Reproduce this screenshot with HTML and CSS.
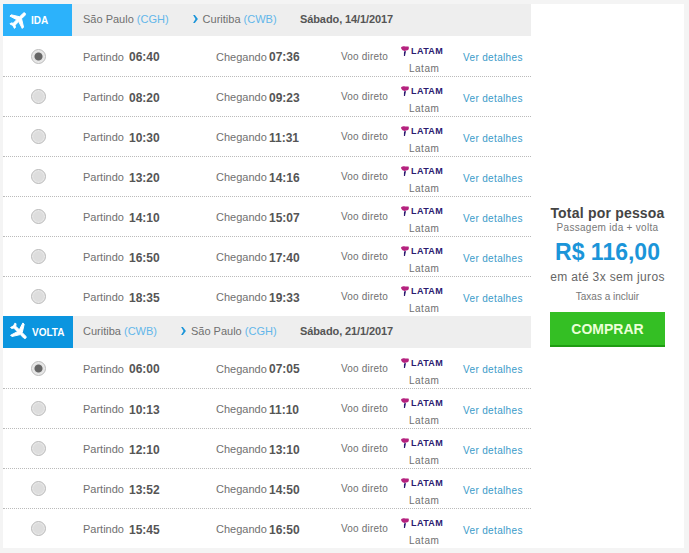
FILE: index.html
```html
<!DOCTYPE html>
<html lang="pt-BR">
<head>
    <meta charset="UTF-8">
    <meta name="viewport" content="width=device-width, initial-scale=1.0">
    <title>Passagens</title>
    <link rel="stylesheet" href="styles.css">
</head>
<body>
    <svg class="sprites" width="0" height="0">
        <symbol id="plane" viewBox="0 0 24 24">
            <path d="M21 16v-2l-8-5V3.5c0-.83-.67-1.5-1.5-1.5S10 2.67 10 3.5V9l-8 5v2l8-2.5V19l-2 1.5V22l3.5-1 3.5 1v-1.5L13 19v-5.5z"/>
        </symbol>
        <symbol id="chevron" viewBox="0 0 6 10">
            <path d="M0 0h2.2L6 5 2.2 10H0l3-5z"/>
        </symbol>
        <symbol id="pin" viewBox="0 0 8 10">
            <path fill="#b5227f" d="M0 1.5C1.5.3 3 .2 4 .5h3.5c.6 1 .5 2.5-.4 3.5L5.3 4.400 3.500 5 1.500 4.200C.6 3.500.2 2.500 0 1.500z"/>
            <path fill="#2b1a70" d="M3 5.500l2-.4L4 10H2.900z"/>
        </symbol>
    </svg>

    <div class="page">
        <div class="flights">
            <div class="leg-header">
                <div class="badge badge-ida"><svg class="plane"><use href="#plane"/></svg>IDA</div>
                <div class="route">
                    <span>São Paulo <em>(CGH)</em></span>
                    <svg class="chevron"><use href="#chevron"/></svg>
                    <span>Curitiba <em>(CWB)</em></span>
                </div>
                <div class="date">Sábado, 14/1/2017</div>
            </div>
            <div class="row">
                <div class="col-radio"><span class="radio selected"></span></div>
                <div class="col-dep"><span class="label">Partindo</span><b>06:40</b></div>
                <div class="col-arr"><span class="label">Chegando</span><b>07:36</b></div>
                <div class="col-stops">Voo direto</div>
                <div class="col-airline"><div class="logo"><svg class="pin"><use href="#pin"/></svg>LATAM</div><div class="airline-name">Latam</div></div>
                <a class="details" href="#">Ver detalhes</a>
            </div>
            <div class="row">
                <div class="col-radio"><span class="radio"></span></div>
                <div class="col-dep"><span class="label">Partindo</span><b>08:20</b></div>
                <div class="col-arr"><span class="label">Chegando</span><b>09:23</b></div>
                <div class="col-stops">Voo direto</div>
                <div class="col-airline"><div class="logo"><svg class="pin"><use href="#pin"/></svg>LATAM</div><div class="airline-name">Latam</div></div>
                <a class="details" href="#">Ver detalhes</a>
            </div>
            <div class="row">
                <div class="col-radio"><span class="radio"></span></div>
                <div class="col-dep"><span class="label">Partindo</span><b>10:30</b></div>
                <div class="col-arr"><span class="label">Chegando</span><b>11:31</b></div>
                <div class="col-stops">Voo direto</div>
                <div class="col-airline"><div class="logo"><svg class="pin"><use href="#pin"/></svg>LATAM</div><div class="airline-name">Latam</div></div>
                <a class="details" href="#">Ver detalhes</a>
            </div>
            <div class="row">
                <div class="col-radio"><span class="radio"></span></div>
                <div class="col-dep"><span class="label">Partindo</span><b>13:20</b></div>
                <div class="col-arr"><span class="label">Chegando</span><b>14:16</b></div>
                <div class="col-stops">Voo direto</div>
                <div class="col-airline"><div class="logo"><svg class="pin"><use href="#pin"/></svg>LATAM</div><div class="airline-name">Latam</div></div>
                <a class="details" href="#">Ver detalhes</a>
            </div>
            <div class="row">
                <div class="col-radio"><span class="radio"></span></div>
                <div class="col-dep"><span class="label">Partindo</span><b>14:10</b></div>
                <div class="col-arr"><span class="label">Chegando</span><b>15:07</b></div>
                <div class="col-stops">Voo direto</div>
                <div class="col-airline"><div class="logo"><svg class="pin"><use href="#pin"/></svg>LATAM</div><div class="airline-name">Latam</div></div>
                <a class="details" href="#">Ver detalhes</a>
            </div>
            <div class="row">
                <div class="col-radio"><span class="radio"></span></div>
                <div class="col-dep"><span class="label">Partindo</span><b>16:50</b></div>
                <div class="col-arr"><span class="label">Chegando</span><b>17:40</b></div>
                <div class="col-stops">Voo direto</div>
                <div class="col-airline"><div class="logo"><svg class="pin"><use href="#pin"/></svg>LATAM</div><div class="airline-name">Latam</div></div>
                <a class="details" href="#">Ver detalhes</a>
            </div>
            <div class="row">
                <div class="col-radio"><span class="radio"></span></div>
                <div class="col-dep"><span class="label">Partindo</span><b>18:35</b></div>
                <div class="col-arr"><span class="label">Chegando</span><b>19:33</b></div>
                <div class="col-stops">Voo direto</div>
                <div class="col-airline"><div class="logo"><svg class="pin"><use href="#pin"/></svg>LATAM</div><div class="airline-name">Latam</div></div>
                <a class="details" href="#">Ver detalhes</a>
            </div>

            <div class="leg-header">
                <div class="badge badge-volta"><svg class="plane plane-back"><use href="#plane"/></svg>VOLTA</div>
                <div class="route">
                    <span>Curitiba <em>(CWB)</em></span>
                    <svg class="chevron"><use href="#chevron"/></svg>
                    <span>São Paulo <em>(CGH)</em></span>
                </div>
                <div class="date">Sábado, 21/1/2017</div>
            </div>
            <div class="row">
                <div class="col-radio"><span class="radio selected"></span></div>
                <div class="col-dep"><span class="label">Partindo</span><b>06:00</b></div>
                <div class="col-arr"><span class="label">Chegando</span><b>07:05</b></div>
                <div class="col-stops">Voo direto</div>
                <div class="col-airline"><div class="logo"><svg class="pin"><use href="#pin"/></svg>LATAM</div><div class="airline-name">Latam</div></div>
                <a class="details" href="#">Ver detalhes</a>
            </div>
            <div class="row">
                <div class="col-radio"><span class="radio"></span></div>
                <div class="col-dep"><span class="label">Partindo</span><b>10:13</b></div>
                <div class="col-arr"><span class="label">Chegando</span><b>11:10</b></div>
                <div class="col-stops">Voo direto</div>
                <div class="col-airline"><div class="logo"><svg class="pin"><use href="#pin"/></svg>LATAM</div><div class="airline-name">Latam</div></div>
                <a class="details" href="#">Ver detalhes</a>
            </div>
            <div class="row">
                <div class="col-radio"><span class="radio"></span></div>
                <div class="col-dep"><span class="label">Partindo</span><b>12:10</b></div>
                <div class="col-arr"><span class="label">Chegando</span><b>13:10</b></div>
                <div class="col-stops">Voo direto</div>
                <div class="col-airline"><div class="logo"><svg class="pin"><use href="#pin"/></svg>LATAM</div><div class="airline-name">Latam</div></div>
                <a class="details" href="#">Ver detalhes</a>
            </div>
            <div class="row">
                <div class="col-radio"><span class="radio"></span></div>
                <div class="col-dep"><span class="label">Partindo</span><b>13:52</b></div>
                <div class="col-arr"><span class="label">Chegando</span><b>14:50</b></div>
                <div class="col-stops">Voo direto</div>
                <div class="col-airline"><div class="logo"><svg class="pin"><use href="#pin"/></svg>LATAM</div><div class="airline-name">Latam</div></div>
                <a class="details" href="#">Ver detalhes</a>
            </div>
            <div class="row">
                <div class="col-radio"><span class="radio"></span></div>
                <div class="col-dep"><span class="label">Partindo</span><b>15:45</b></div>
                <div class="col-arr"><span class="label">Chegando</span><b>16:50</b></div>
                <div class="col-stops">Voo direto</div>
                <div class="col-airline"><div class="logo"><svg class="pin"><use href="#pin"/></svg>LATAM</div><div class="airline-name">Latam</div></div>
                <a class="details" href="#">Ver detalhes</a>
            </div>
        </div>

        <div class="summary">
            <div class="summary-title">Total por pessoa</div>
            <div class="summary-sub">Passagem ida + volta</div>
            <div class="summary-price">R$ 116,00</div>
            <div class="summary-terms">em até 3x sem juros</div>
            <div class="summary-tax">Taxas a incluir</div>
            <button class="buy">COMPRAR</button>
        </div>
    </div>
</body>
</html>
```

FILE: styles.css
```css
html, body {
    height: 100%;
}
body {
    background-color: #f4f4f4;
    color: #707070;
    font-family: 'Liberation Sans', Arial, sans-serif;
    font-size: 11px;
    margin: 0;
    overflow: hidden;
}
.sprites {
    display: block;
    height: 0;
}
.page {
    display: flex;
    padding: 4px 0 0 3px;
}
.flights {
    width: 528px;
    background-color: white;
}
.leg-header {
    display: flex;
    align-items: center;
    height: 32px;
    background-color: #eee;
}
.badge {
    display: flex;
    align-items: center;
    height: 32px;
    color: white;
    font-weight: bold;
    font-size: 10px;
}
.badge-ida {
    width: 69px;
    margin-right: 11px;
    background-color: #2cb2fb;
}
.badge-volta {
    width: 70px;
    margin-right: 10px;
    background-color: #0b95df;
}
.plane {
    width: 22px;
    height: 22px;
    margin: 0 1px 0 5px;
    fill: white;
    stroke: white;
    stroke-width: 1;
    transform: rotate(45deg);
}
.plane-back {
    margin-right: 2px;
    transform: rotate(135deg);
}
.route {
    display: flex;
    align-items: center;
    width: 217px;
    padding-bottom: 3px;
}
.route em {
    font-style: normal;
    color: #62b6ea;
}
.chevron {
    width: 5px;
    height: 8px;
    margin: 1px 5px 0 24px;
    fill: #1b95d9;
}
.date {
    padding-bottom: 3px;
    font-weight: bold;
    color: #555;
    letter-spacing: -0.1px;
}
.row {
    display: flex;
    align-items: center;
    box-sizing: border-box;
    height: 40px;
    padding-top: 1px;
    border-top: 1px dotted #bbb;
}
.leg-header + .row {
    border-top: none;
}
.col-radio {
    width: 80px;
    padding-left: 28px;
    box-sizing: border-box;
}
.radio {
    display: block;
    box-sizing: border-box;
    width: 15px;
    height: 15px;
    margin-top: -1px;
    border: 1px solid #bbb;
    border-radius: 50%;
    background-color: #ddd;
    box-shadow: inset 0 0 2px #fff;
}
.radio.selected {
    background: radial-gradient(circle, #666 0, #666 3.5px, #e2e2e2 4.5px);
}
.col-dep, .col-arr {
    display: flex;
    align-items: center;
}
.col-dep {
    width: 133px;
}
.col-arr {
    width: 125px;
}
.col-dep .label {
    width: 46px;
}
.col-arr .label {
    width: 53px;
}
.col-dep b, .col-arr b {
    font-size: 12px;
    color: #555;
    margin-top: 1px;
}
.col-stops {
    width: 60px;
    margin-top: -1px;
    font-size: 10px;
    letter-spacing: 0.2px;
}
.col-airline {
    width: 62px;
    margin-top: 5px;
}
.logo {
    display: flex;
    align-items: center;
    gap: 2px;
    height: 12px;
    margin-bottom: 6px;
    color: #2b1a70;
    font-size: 9px;
    font-weight: bold;
    letter-spacing: 0.4px;
}
.pin {
    width: 8px;
    height: 10px;
}
.airline-name {
    padding-left: 8px;
    font-size: 10px;
    letter-spacing: 0.5px;
}
.details {
    margin-top: 2px;
    color: #3a9bc9;
    font-size: 10px;
    letter-spacing: 0.35px;
    text-decoration: none;
    white-space: nowrap;
}
.summary {
    display: flex;
    flex-direction: column;
    align-items: center;
    justify-content: center;
    box-sizing: border-box;
    width: 153px;
    background-color: white;
    text-align: center;
}
.summary-title {
    font-size: 14px;
    line-height: 16px;
    font-weight: bold;
    color: #444;
    letter-spacing: 0.2px;
}
.summary-sub {
    font-size: 10px;
    line-height: 14px;
    color: #777;
    letter-spacing: 0.3px;
}
.summary-price {
    margin-top: 4px;
    font-size: 23px;
    line-height: 26px;
    font-weight: bold;
    color: #1b95d9;
}
.summary-terms {
    margin-top: 5px;
    font-size: 12px;
    line-height: 14px;
    color: #666;
    letter-spacing: 0.35px;
}
.summary-tax {
    margin-top: 7px;
    font-size: 10px;
    line-height: 12px;
    color: #777;
}
.buy {
    width: 115px;
    height: 35px;
    margin-top: 9px;
    padding: 0;
    border: none;
    border-bottom: 2px solid #1f9c12;
    background-color: #34bf24;
    color: #eaffd8;
    font-family: inherit;
    font-size: 14px;
    font-weight: bold;
}
```
